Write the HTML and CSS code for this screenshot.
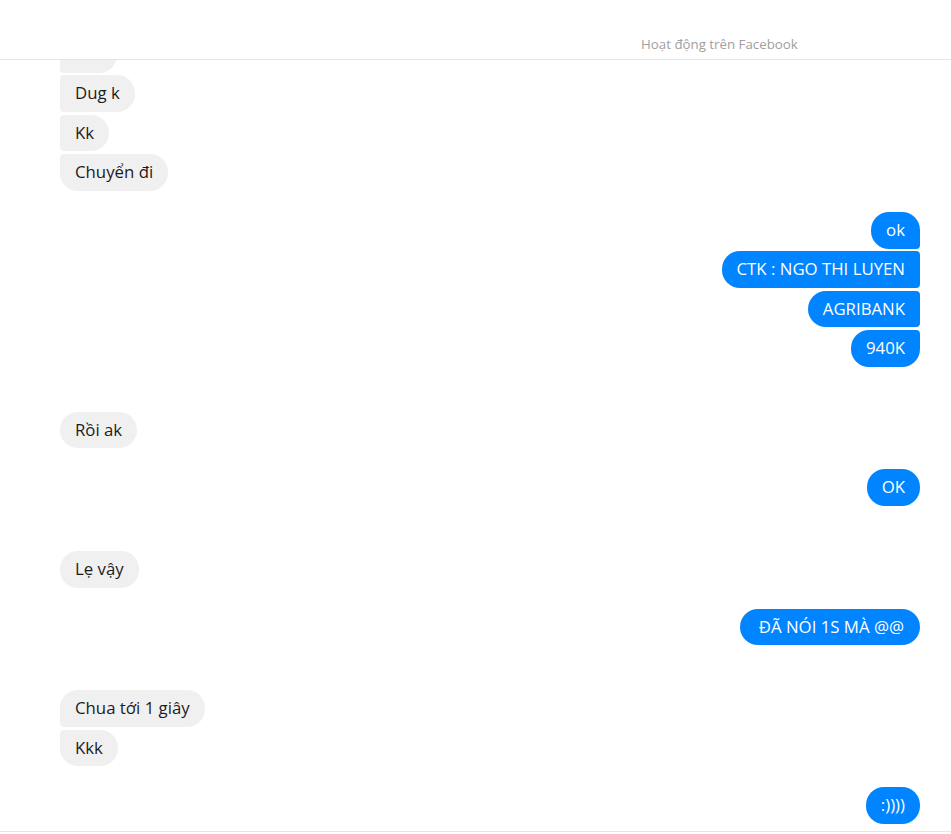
FILE: index.html
```html
<!DOCTYPE html>
<html lang="vi">
<head>
<meta charset="utf-8">
<link rel="stylesheet" href="styles.css">
</head>
<body>
<div class="header"><span class="status">Hoạt động trên Facebook</span></div>
<div class="thread">
  <div class="list">
    <div class="group in first-group">
      <div class="msg stub"></div>
      <div class="msg">Dug k</div>
      <div class="msg">Kk</div>
      <div class="msg">Chuyển đi</div>
    </div>
    <div class="group out near">
      <div class="msg">ok</div>
      <div class="msg">CTK : NGO THI LUYEN</div>
      <div class="msg">AGRIBANK</div>
      <div class="msg">940K</div>
    </div>
    <div class="group in far">
      <div class="msg">Rồi ak</div>
    </div>
    <div class="group out near">
      <div class="msg">OK</div>
    </div>
    <div class="group in far">
      <div class="msg">Lẹ vậy</div>
    </div>
    <div class="group out near">
      <div class="msg wide">ĐÃ NÓI 1S MÀ @@</div>
    </div>
    <div class="group in far">
      <div class="msg">Chua tới 1 giây</div>
      <div class="msg">Kkk</div>
    </div>
    <div class="group out near">
      <div class="msg">:))))</div>
    </div>
  </div>
</div>
</body>
</html>
```
FILE: styles.css
```css
html, body {
  margin: 0;
  padding: 0;
  background: #fff;
}
body {
  font-family: "Open Sans", "Noto Sans", sans-serif;
  width: 951px;
  height: 834px;
  overflow: hidden;
}
.header {
  height: 59px;
  border-bottom: 1px solid #e5e5e5;
  box-sizing: content-box;
  display: flex;
  align-items: flex-end;
  padding-left: 641px;
}
.status {
  font-size: 13.3px;
  color: #a0a0a0;
  line-height: 16px;
  padding-bottom: 7px;
}
.thread {
  height: 771px;
  border-bottom: 1px solid #e5e5e5;
  overflow: hidden;
}
.list {
  padding: 0 31px 0 60px;
  display: flex;
  flex-direction: column;
}
.group {
  display: flex;
  flex-direction: column;
  gap: 2.7px;
}
.group.in { align-items: flex-start; }
.group.out { align-items: flex-end; }
.first-group { margin-top: -24px; }
.near { margin-top: 21px; }
.far { margin-top: 45px; }
.msg {
  height: 36.7px;
  line-height: 36.7px;
  padding: 0 15px;
  font-size: 16.8px;
  white-space: nowrap;
  box-sizing: border-box;
}
.msg.stub { width: 57px; }
.msg.wide { padding: 0 16px 0 19px; }
.in .msg {
  background: #f1f0f0;
  color: #1c1c1c;
  border-radius: 4px 18px 18px 4px;
}
.in .msg:first-child { border-top-left-radius: 18px; }
.in .msg:last-child { border-bottom-left-radius: 18px; }
.out .msg {
  background: #0084ff;
  color: #fff;
  border-radius: 18px 4px 4px 18px;
}
.out .msg:first-child { border-top-right-radius: 18px; }
.out .msg:last-child { border-bottom-right-radius: 18px; }
```
